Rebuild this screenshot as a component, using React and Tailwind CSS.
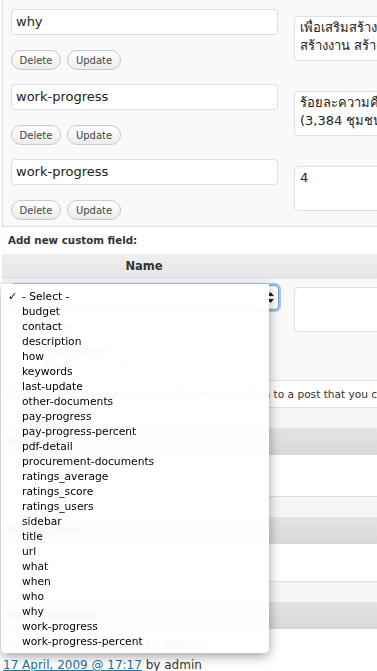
import React from 'react';

const fields = [
    { key: 'why', lines: ['เพื่อเสริมสร้างเศรษฐกิจชุมชน', 'สร้างงาน สร้างรายได้ให้ชุมชน'] },
    { key: 'work-progress', lines: ['ร้อยละความคืบหน้าของโครงการ', '(3,384 ชุมชน จากทั้งหมด)'] },
    { key: 'work-progress', lines: ['4'] },
];

const options = [
    '- Select -', 'budget', 'contact', 'description', 'how', 'keywords', 'last-update',
    'other-documents', 'pay-progress', 'pay-progress-percent', 'pdf-detail',
    'procurement-documents', 'ratings_average', 'ratings_score', 'ratings_users',
    'sidebar', 'title', 'url', 'what', 'when', 'who', 'why', 'work-progress',
    'work-progress-percent',
];

function PillButton({ children, className = '' }) {
    return (
        <div className={`flex h-[20px] items-center justify-center rounded-full border border-[#c9c9c9] bg-linear-to-b from-white to-[#ececec] text-[10px] text-[#464646] ${className}`}>
            {children}
        </div>
    );
}

function BoxHeader({ title, top = true }) {
    return (
        <div className={`ml-[2px] ${top ? 'border-t border-[#dfdfdf]' : ''}`}>
            <div className="h-[20px] bg-[#f6f6f6]" />
            <div className="h-[27px] bg-linear-to-b from-[#e4e4e4] to-[#d8d8d8] pl-[7px] text-[11px] font-bold leading-[27px] text-[#464646]">
                {title}
            </div>
        </div>
    );
}

export default function App() {
    return (
        <div className="relative h-[671px] w-[377px] overflow-hidden bg-white font-['DejaVu_Sans',sans-serif] text-[#333]">
            {/* existing custom fields */}
            <div className="ml-[2px] h-[227px] overflow-hidden border-b border-l border-[#dfdfdf] bg-[#f9f9f9] pl-[8px] pt-[9px]">
                {fields.map((f, i) => (
                    <div key={i} className="flex h-[75px] items-start">
                        <div className="w-[267px] shrink-0">
                            <div className="h-[26px] rounded-[4px] border border-[#dfdfdf] bg-white px-[4px] text-[13px] leading-[24px] text-[#222]">
                                {f.key}
                            </div>
                            <div className="mt-[15px] flex gap-[6px]">
                                <PillButton className="w-[50px]">Delete</PillButton>
                                <PillButton className="w-[54px]">Update</PillButton>
                            </div>
                        </div>
                        <div className="ml-[16px] mt-[7px] h-[45px] w-[200px] shrink-0 overflow-hidden whitespace-nowrap rounded-[4px] border border-[#dfdfdf] bg-white pl-[5px] pt-[2px] text-[13px] leading-[18px] text-[#222]">
                            {f.lines.map((l, j) => (
                                <div key={j}>{l}</div>
                            ))}
                        </div>
                    </div>
                ))}
            </div>

            <div className="h-[27px] pl-[8px] pt-[6px] text-[10.3px] font-bold leading-[14px] text-[#333]">
                Add new custom field:
            </div>

            {/* table header */}
            <div className="ml-[2px] flex h-[25px] bg-linear-to-b from-[#efefef] to-[#e6e6e6]">
                <div className="w-[284px] text-center text-[11.5px] font-bold leading-[25px] text-[#333]">Name</div>
            </div>

            {/* new field row */}
            <div className="ml-[2px] flex h-[101px] bg-[#f9f9f9] pl-[9px]">
                <div className="flex w-[268px] shrink-0 flex-col">
                    <div className="relative mt-[6px] h-[25px] rounded-[4px] border border-[#6f9bd3] bg-white shadow-[0_0_0_2px_#a9c8ef]">
                        <div className="pl-[8px] text-[11px] leading-[23px]">- Select -</div>
                        <svg className="absolute right-[4px] top-[6px]" width="7" height="11" viewBox="0 0 7 11">
                            <path d="M3.5 0L7 4H0z" fill="#222" />
                            <path d="M3.5 11L7 7H0z" fill="#222" />
                        </svg>
                    </div>
                    <div className="mt-[8px] pl-[4px] text-[11px] text-[#21759b] underline">Enter new</div>
                    <PillButton className="ml-[34px] mt-[13px] w-[88px]">Add Custom Field</PillButton>
                </div>
                <div className="ml-[15px] mt-[8px] h-[45px] w-[200px] shrink-0 rounded-[4px] border border-[#dfdfdf] bg-white" />
            </div>

            <div className="ml-[2px] h-[28px] whitespace-nowrap border-y border-[#dfdfdf] bg-white pl-[5px] text-[10.6px] leading-[26px] text-[#333]">
                Custom fields can be used to add extra metadata to a post that you can use in your theme.
            </div>

            <BoxHeader title="Discussion" top={false} />
            <div className="ml-[2px] h-[41px] pl-[10px] pt-[14px]">
                <div className="h-[12px] w-[12px] rounded-[3px] border border-[#999] bg-white" />
            </div>

            <BoxHeader title="Post Author" />
            <div className="ml-[2px] h-[37px] pl-[8px] pt-[9px]">
                <div className="h-[20px] w-[70px] rounded-[4px] border border-[#bbb] bg-white pl-[5px] text-[11px] leading-[18px]">admin</div>
            </div>

            <BoxHeader title="Post Revisions" />
            <div className="ml-[2px] pl-[1px] pt-[5px] text-[12px] leading-[21px] text-[#333]">
                <div>
                    <span className="text-[#21759b] underline">17 April, 2009 @ 17:18</span> by admin
                </div>
                <div>
                    <span className="text-[#21759b] underline">17 April, 2009 @ 17:17</span> by admin
                </div>
            </div>

            {/* open select menu */}
            <div className="absolute left-[1px] top-[284px] h-[369px] w-[268px] rounded-b-[5px] bg-white/[0.94] pt-[5px] shadow-[0_3px_12px_rgba(0,0,0,0.38)] backdrop-blur-[1.5px]">
                {options.map((o, i) => (
                    <div key={o} className="relative h-[15px] whitespace-nowrap pl-[21px] text-[10.7px] leading-[15px] text-black">
                        {i === 0 && <span className="absolute left-[7px] top-0 text-[11px] font-bold">✓</span>}
                        {o}
                    </div>
                ))}
            </div>
        </div>
    );
}
